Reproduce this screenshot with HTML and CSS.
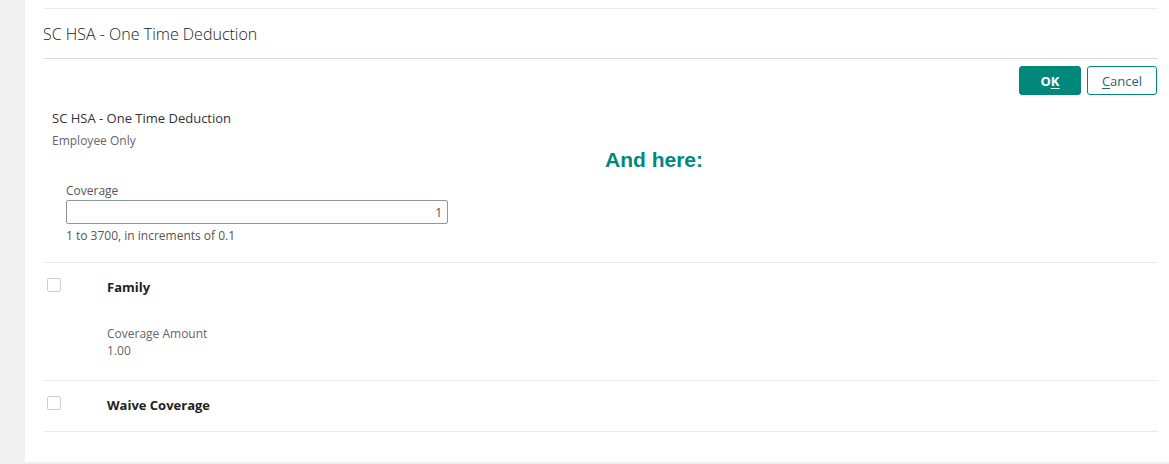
FILE: index.html
```html
<!DOCTYPE html>
<html lang="en">
<head>
  <meta charset="UTF-8">
  <title>SC HSA - One Time Deduction</title>
  <link rel="stylesheet" href="styles.css">
</head>
<body>
  <div class="shell">
    <div class="panel">
      <header class="panel-head">
        <h1>SC HSA - One Time Deduction</h1>
      </header>
      <div class="actions">
        <button class="btn btn-primary">O<u>K</u></button>
        <button class="btn btn-secondary"><u>C</u>ancel</button>
      </div>

      <section class="plan">
        <div class="plan-name">SC HSA - One Time Deduction</div>
        <div class="plan-tier">Employee Only</div>
        <div class="note">And here:</div>

        <div class="field">
          <label for="coverage">Coverage</label>
          <input id="coverage" type="text" value="1">
          <div class="hint">1 to 3700, in increments of 0.1</div>
        </div>
      </section>

      <div class="option option-family">
        <span class="check"></span>
        <div class="option-body">
          <div class="option-title">Family</div>
          <div class="option-detail">
            <div>Coverage Amount</div>
            <div>1.00</div>
          </div>
        </div>
      </div>

      <div class="option">
        <span class="check"></span>
        <div class="option-body">
          <div class="option-title">Waive Coverage</div>
        </div>
      </div>
    </div>
  </div>
</body>
</html>
```

FILE: styles.css
```css
/* Page */
body { margin: 0; background-color: #f0f0f0; font-family: 'Open Sans', 'Noto Sans', sans-serif; color: #333; }
.shell { padding-left: 25px; }
.panel { background-color: #fff; height: 462px; padding: 8px 11px 0 18px; box-sizing: border-box; }

/* Header */
.panel-head { border-top: 1px solid #ececec; border-bottom: 1px solid #d5dfe9; height: 51px; box-sizing: border-box; display: flex; align-items: center; }
.panel-head h1 { margin: 0; font-size: 16px; font-weight: 300; color: #222; padding-top: 1px; }

/* Buttons */
.actions { display: flex; justify-content: flex-end; gap: 6px; padding: 7px 1px 0 0; }
.btn {
  font-family: inherit; font-size: 13px; height: 29px; border-radius: 3px;
  cursor: pointer; box-sizing: border-box; padding: 0;
}
.btn u { text-underline-offset: 2px; }
.btn-primary { width: 62px; background-color: #00897b; border: 1px solid #00897b; color: #fff; font-weight: 700; }
.btn-secondary { width: 70px; background-color: #fff; border: 1px solid #00897b; color: #1d6a6f; }

/* Plan */
.plan { padding: 0 0 0 9px; border-bottom: 1px solid #ebebeb; height: 168px; box-sizing: border-box; }
.plan-name { font-size: 13px; color: #333; padding-top: 13px; line-height: 20px; }
.plan-tier { font-size: 12px; color: #666; line-height: 20px; margin-top: 3px; }
.note {
  font-family: 'Liberation Sans', Arial, sans-serif; font-weight: 700; font-size: 21px;
  color: #00897b; margin-left: 553px; line-height: 24px; margin-top: -3px;
}
.field { padding-left: 14px; margin-top: 10px; }
.field label { display: block; font-size: 12px; color: #555; line-height: 18px; }
.field input {
  display: block; width: 382px; height: 24px; box-sizing: border-box; margin: 0;
  border: 1px solid #8a98a5; border-radius: 2px; text-align: right; padding: 0 5px 0 6px;
  font-family: inherit; font-size: 12px; color: #555;
}
.hint { font-size: 12px; color: #555; line-height: 18px; margin-top: 3px; }

/* Options */
.option { display: flex; border-bottom: 1px solid #ebebeb; padding: 15px 0 0 4px; box-sizing: border-box; height: 51px; }
.option-family { height: 118px; }
.check { width: 12px; height: 12px; border: 1px solid #cfcfcf; border-radius: 2px; flex: none; }
.option-body { margin-left: 46px; }
.option-title { font-size: 13px; font-weight: 700; color: #222; line-height: 18px; margin-top: 0; }
.option-detail { font-size: 12px; color: #666; line-height: 17px; margin-top: 29px; }
```
